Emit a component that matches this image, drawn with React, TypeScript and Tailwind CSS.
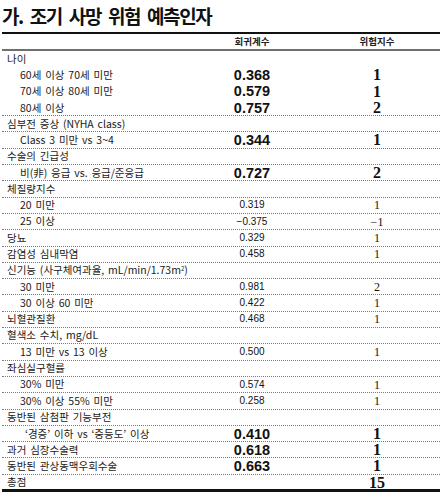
import type { ReactNode } from 'react';

type Row = {
  label: ReactNode;
  sub?: 1 | 2;
  coef?: string;
  risk?: string;
  big?: boolean;
  noLine?: boolean;
};

const rows: Row[] = [
  { label: '나이', noLine: true },
  { label: '60세 이상 70세 미만', sub: 1, coef: '0.368', risk: '1', big: true, noLine: true },
  { label: '70세 이상 80세 미만', sub: 1, coef: '0.579', risk: '1', big: true, noLine: true },
  { label: '80세 이상', sub: 1, coef: '0.757', risk: '2', big: true },
  { label: '심부전 증상 (NYHA class)' },
  { label: 'Class 3 미만 vs 3~4', sub: 1, coef: '0.344', risk: '1', big: true },
  { label: '수술의 긴급성' },
  { label: '비(非) 응급 vs. 응급/준응급', sub: 1, coef: '0.727', risk: '2', big: true },
  { label: '체질량지수' },
  { label: '20 미만', sub: 1, coef: '0.319', risk: '1' },
  { label: '25 이상', sub: 1, coef: '−0.375', risk: '−1' },
  { label: '당뇨', coef: '0.329', risk: '1' },
  { label: '감염성 심내막염', coef: '0.458', risk: '1' },
  {
    label: (
      <>
        신기능 (사구체여과율, mL/min/1.73m<sup className="text-[6px]">2</sup>)
      </>
    ),
  },
  { label: '30 미만', sub: 1, coef: '0.981', risk: '2' },
  { label: '30 이상 60 미만', sub: 1, coef: '0.422', risk: '1' },
  { label: '뇌혈관질환', coef: '0.468', risk: '1' },
  { label: '혈색소 수치, mg/dL' },
  { label: '13 미만 vs 13 이상', sub: 1, coef: '0.500', risk: '1' },
  { label: '좌심실구혈률' },
  { label: '30% 미만', sub: 1, coef: '0.574', risk: '1' },
  { label: '30% 이상 55% 미만', sub: 1, coef: '0.258', risk: '1' },
  { label: '동반된 삼첨판 기능부전' },
  { label: '‘경증’ 이하 vs ‘중등도’ 이상', sub: 2, coef: '0.410', risk: '1', big: true },
  { label: '과거 심장수술력', coef: '0.618', risk: '1', big: true },
  { label: '동반된 관상동맥우회수술', coef: '0.663', risk: '1', big: true },
];

const kr = "font-['Noto_Sans_CJK_KR','Noto_Sans',sans-serif]";

function TableRow({ row }: { row: Row }) {
  const pad = row.sub === 2 ? 'pl-[23px]' : row.sub === 1 ? 'pl-[18px]' : 'pl-[5px]';
  return (
    <div
      className={`grid h-[16.3px] grid-cols-[188px_124px_1fr] items-center ${
        row.noLine ? '' : 'border-b border-dotted border-[#7a7a7a]'
      }`}
    >
      <div
        className={`${pad} ${kr} whitespace-nowrap text-[10.5px] leading-none text-[#1a1a1a] [word-spacing:1.5px]`}
      >
        {row.label}
      </div>
      <div
        className={`text-center leading-none text-[#111] font-['Liberation_Sans',Arial,sans-serif] ${
          row.big ? 'text-[14.5px] font-bold' : 'text-[10px]'
        }`}
      >
        {row.coef}
      </div>
      <div
        className={`text-center leading-none text-[#111] font-['Liberation_Serif','Times_New_Roman',serif] ${
          row.big ? 'text-[16px] font-bold' : 'text-[12px]'
        }`}
      >
        {row.risk}
      </div>
    </div>
  );
}

export default function App() {
  return (
    <div className="h-[500px] w-[446px] bg-white">
      <div
        className={`flex h-[32px] items-center pl-[2px] ${kr} text-[19px] font-bold tracking-[-1.4px] text-[#111] [word-spacing:4px]`}
      >
        가. 조기 사망 위험 예측인자
      </div>
      <div className="ml-[2px] w-[438px]">
        <div className="border-t-2 border-[#111]" />
        <div
          className={`grid h-[17px] grid-cols-[188px_124px_1fr] items-center border-b-2 border-[#6f6f6f] ${kr} text-[9.5px] font-bold leading-none text-[#222]`}
        >
          <div />
          <div className="text-center">회귀계수</div>
          <div className="text-center">위험지수</div>
        </div>
        {rows.map((row, i) => (
          <TableRow key={i} row={row} />
        ))}
        <div className="grid h-[17px] grid-cols-[188px_124px_1fr] items-center border-b-[3px] border-[#111]">
          <div className={`pl-[5px] ${kr} text-[10.5px] leading-none text-[#1a1a1a]`}>총점</div>
          <div />
          <div className="text-center font-['Liberation_Serif','Times_New_Roman',serif] text-[16px] font-bold leading-none text-[#111]">
            15
          </div>
        </div>
      </div>
    </div>
  );
}
